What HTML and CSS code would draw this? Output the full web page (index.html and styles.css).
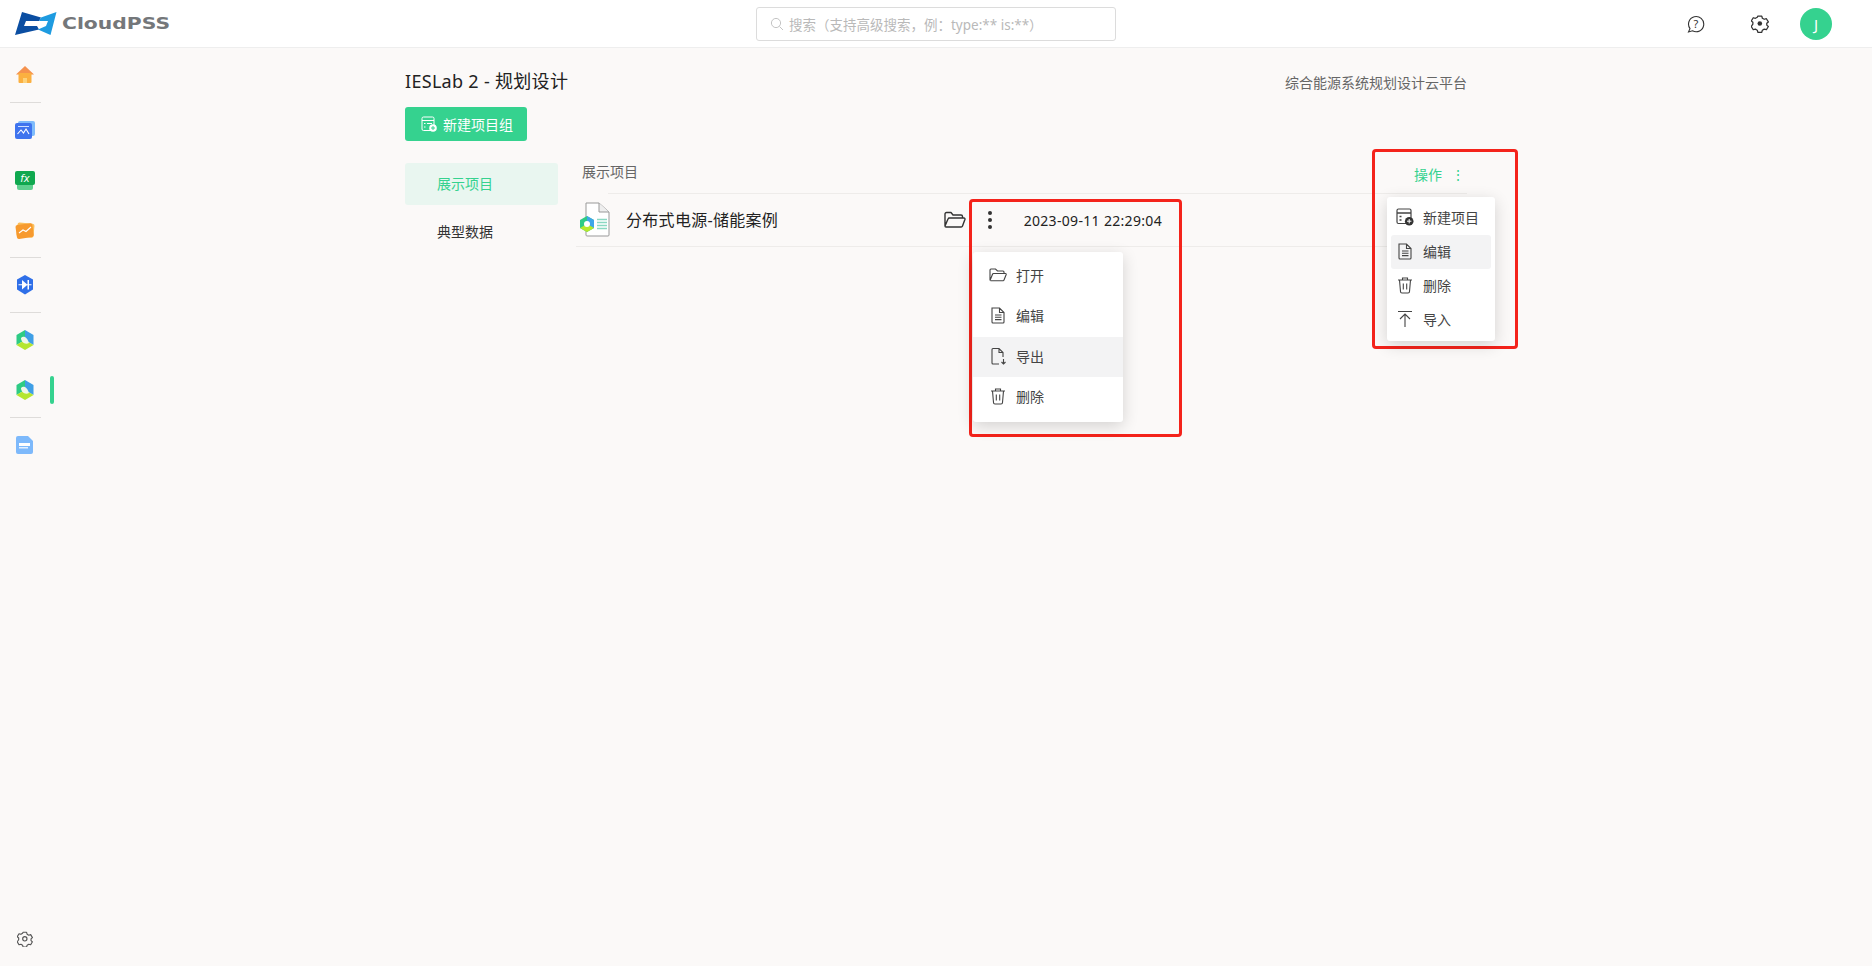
FILE: index.html
```html
<!DOCTYPE html>
<html lang="zh-CN">
<head>
<meta charset="utf-8">
<title>IESLab 2 - 规划设计</title>
<link rel="stylesheet" href="styles.css">
</head>
<body>
<header class="topbar">
  <div class="brand">
    <svg class="logo" viewBox="0 0 42 23" width="42" height="23">
      <path fill="#0b4ea2" d="M0 23 L7 0 L26 5.5 L24 9 L11 9 L9 14 L22 14 L24 17.5 Z"/>
      <path fill="#1e9be0" d="M41.5 0 L35.5 23 L23 17.5 L31 14 L33 9 L24 9 L26 5.5 Z"/>
    </svg>
    <span class="brand-name">CloudPSS</span>
  </div>
  <div class="search">
    <svg class="search-icon" viewBox="0 0 14 14" width="14" height="14"><circle cx="6" cy="6" r="4.6" fill="none" stroke="#c4c4c4"/><path d="M9.5 9.5 L13 13" stroke="#c4c4c4"/></svg>
    <span>搜索（支持高级搜索，例：type:** is:**）</span>
  </div>
  <div class="top-actions">
    <svg viewBox="0 0 18 18" width="18" height="18"><path fill="none" stroke="#333" stroke-width="1.1" d="M1.5 17 L3 13.6 A7.6 7.6 0 1 1 5.5 15.8 Z"/><text x="9" y="12.5" class="qmark">?</text></svg>
    <svg viewBox="0 0 18 18" width="18" height="18"><path fill="none" stroke="#333" stroke-width="1.3" stroke-linejoin="round" d="M7 1.5h4l.6 2.2 1.9 1.1 2.2-.6 2 3.4-1.6 1.4v2l1.6 1.4-2 3.4-2.2-.6-1.9 1.1-.6 2.2H7l-.6-2.2-1.9-1.1-2.2.6-2-3.4L1.9 10V8L.3 6.6l2-3.4 2.2.6 1.9-1.1z" transform="translate(0 -.3) scale(.98 .95)"/><circle cx="8.8" cy="8.5" r="2.3" fill="#333"/></svg>
    <span class="avatar">J</span>
  </div>
</header>

<div class="shell">
  <nav class="rail">
    <div class="rail-item">
      <svg viewBox="0 0 20 20" width="20" height="20"><path fill="#f5924e" d="M10 1 L19 9.5 H1 Z"/><rect x="3.5" y="8" width="13" height="10" rx="1" fill="#fbb040"/><rect x="8" y="13" width="4" height="5" fill="#fdd27a"/></svg>
    </div>
    <div class="rail-sep"></div>
    <div class="rail-item">
      <svg viewBox="0 0 20 20" width="20" height="20"><rect x="3" y="1" width="17" height="15" rx="2" fill="#7fbcfb"/><rect x="0" y="3" width="17" height="16" rx="2" fill="#3f74ee"/><path d="M3 6.5h11" stroke="#cfe0ff"/><path d="M2.5 14 L6 10 L8.5 13 L11 9 L14 14" fill="none" stroke="#fff" stroke-width="1.1"/></svg>
    </div>
    <div class="rail-item">
      <svg viewBox="0 0 20 20" width="20" height="20"><rect x="2" y="4" width="16" height="16" rx="2" fill="#5fd08f"/><rect x="0" y="1" width="20" height="14" rx="2" fill="#10a84f"/><text x="10" y="12" class="fx">fx</text></svg>
    </div>
    <div class="rail-item">
      <svg viewBox="0 0 20 20" width="20" height="20"><rect x="2" y="3" width="17" height="14" rx="2" fill="#fbbf5a" transform="rotate(6 10 10)"/><rect x="1" y="4" width="17" height="14" rx="2" fill="#f79a2e" transform="rotate(-8 10 10)"/><path d="M4 13 L8 10 L11 11.5 L16 7" fill="none" stroke="#fff" stroke-width="1.1"/></svg>
    </div>
    <div class="rail-sep"></div>
    <div class="rail-item">
      <svg viewBox="0 0 20 20" width="20" height="20"><path fill="#2f6fe8" d="M10 0 L18 4.5 V14.5 L10 19.5 L2 14.5 V4.5 Z"/><path fill="#fff" d="M7 5 L12.5 9.75 L7 14.5 Z M12.5 5 H14 V14.5 H12.5 Z M3.5 9.2 H16.5 V10.3 H3.5 Z"/></svg>
    </div>
    <div class="rail-sep"></div>
    <div class="rail-item">
      <svg viewBox="0 0 20 20" width="20" height="20"><path fill="#2ecb85" d="M10 10 L10 0 L1.5 5 V15 Z"/><path fill="#3f9fe6" d="M10 10 L10 0 L18.5 5 V15 Z"/><path fill="#b4e62f" d="M10 10 L18.5 15 L10 20 L1.5 15 Z"/><path fill="#eef6e8" d="M6 8 C8 5.5 12 6.5 14 13 C10 15 6 12 6 8Z"/></svg>
    </div>
    <div class="rail-item rail-active">
      <svg viewBox="0 0 20 20" width="20" height="20"><path fill="#2ecb85" d="M10 10 L10 0 L1.5 5 V15 Z"/><path fill="#3f9fe6" d="M10 10 L10 0 L18.5 5 V15 Z"/><path fill="#b4e62f" d="M10 10 L18.5 15 L10 20 L1.5 15 Z"/><path fill="#eef6e8" d="M6 8 C8 5.5 12 6.5 14 13 C10 15 6 12 6 8Z"/></svg>
    </div>
    <div class="rail-sep"></div>
    <div class="rail-item">
      <svg viewBox="0 0 20 20" width="20" height="20"><path fill="#7db9fb" d="M3 1 H13 L18 6 V17 A2 2 0 0 1 16 19 H3 A2 2 0 0 1 1 17 V3 A2 2 0 0 1 3 1Z"/><rect x="4" y="8" width="11" height="3" fill="#fff"/><rect x="4" y="12" width="9" height="1.5" fill="#e3f0ff"/></svg>
    </div>
    <div class="rail-foot">
      <svg viewBox="0 0 18 18" width="16" height="16"><path fill="none" stroke="#555" stroke-width="1.3" stroke-linejoin="round" d="M7 1.5h4l.6 2.2 1.9 1.1 2.2-.6 2 3.4-1.6 1.4v2l1.6 1.4-2 3.4-2.2-.6-1.9 1.1-.6 2.2H7l-.6-2.2-1.9-1.1-2.2.6-2-3.4L1.9 10V8L.3 6.6l2-3.4 2.2.6 1.9-1.1z" transform="scale(.98 .98)"/><circle cx="8.8" cy="8.8" r="2.4" fill="none" stroke="#555" stroke-width="1.3"/></svg>
    </div>
  </nav>

  <main class="content">
    <div class="title-row">
      <h1 class="title">IESLab 2 - 规划设计</h1>
      <span class="subtitle">综合能源系统规划设计云平台</span>
    </div>
    <button class="primary">
      <svg viewBox="0 0 16 16" width="16" height="16"><rect x="1" y="1" width="12" height="13.5" rx="1.5" fill="none" stroke="#fff"/><path d="M1 4.5h12M3 7.5h1.5M3 11h1.5M6 7.5h5" stroke="#fff"/><circle cx="12" cy="12" r="3.8" fill="#fff"/><path d="M10 12h4M12 10v4" stroke="#35d28f"/></svg>
      新建项目组
    </button>
    <div class="columns">
      <aside class="tabs">
        <div class="tab tab-on">展示项目</div>
        <div class="tab">典型数据</div>
      </aside>
      <section class="list">
        <div class="list-head">
          <span class="list-title">展示项目</span>
          <span class="ops">操作<i class="ops-dots">⋮</i></span>
        </div>
        <div class="rule"></div>
        <div class="row">
          <svg class="file-icon" viewBox="0 0 32 36" width="32" height="36">
            <path d="M7 1 H20 L30 10 V33 A1 1 0 0 1 29 34 H8 A1 1 0 0 1 7 33 Z" fill="#fff" stroke="#999"/>
            <path d="M20 1 V10 H30" fill="#eee" stroke="#999"/>
            <path d="M18 17.5h10M18 20.5h10M18 23.5h10M18 26.5h10" stroke="#8ad8c2" stroke-width="1.3"/>
            <path d="M8 14 L15 18 V26 L8 30 L1 26 V18 Z" fill="#2ecb85"/>
            <path d="M8 14 L15 18 V26 L8 22 Z" fill="#3fa6e8"/>
            <path d="M1 26 L8 30 L15 26 L8 22 Z" fill="#b6e82d"/>
            <circle cx="8" cy="22" r="3" fill="#fff"/>
          </svg>
          <span class="row-name">分布式电源-储能案例</span>
          <svg class="folder" viewBox="0 0 22 18" width="22" height="18"><path fill="none" stroke="#333" stroke-width="1.4" stroke-linejoin="round" d="M1 15 V3 A1.5 1.5 0 0 1 2.5 1.5 H7 L9 4 H17 A1.5 1.5 0 0 1 18.5 5.5 V7 M1 15 L4 8 A1.5 1.5 0 0 1 5.5 7 H20 A1 1 0 0 1 21 8.2 L18.5 15 A1.5 1.5 0 0 1 17 16 H2 A1 1 0 0 1 1 15Z"/></svg>
          <span class="kebab"><b></b><b></b><b></b></span>
          <span class="row-date">2023-09-11 22:29:04</span>
        </div>
      </section>
    </div>

    <div class="mark mark-row"></div>
    <div class="mark mark-ops"></div>

    <ul class="menu menu-row">
      <li><svg viewBox="0 0 18 18" width="18" height="18"><path fill="none" stroke="#444" stroke-width="1.1" d="M1 14.5 V4 A1 1 0 0 1 2 3 H6.5 L8.5 5 H14 A1 1 0 0 1 15 6 V7.5 M1 14.5 L3.5 8.3 A1 1 0 0 1 4.5 7.5 H16.5 A.8 .8 0 0 1 17.2 8.5 L15 14 A1 1 0 0 1 14 14.8 H1.5"/></svg>打开</li>
      <li><svg viewBox="0 0 18 18" width="18" height="18"><path fill="none" stroke="#444" stroke-width="1.1" d="M3 2 H10.5 L15 6.5 V16 A1 1 0 0 1 14 17 H4 A1 1 0 0 1 3 16 Z M10.5 2 V6.5 H15 M6 9h6.5M6 11.3h6.5M6 13.6h6.5"/></svg>编辑</li>
      <li class="hot"><svg viewBox="0 0 18 18" width="18" height="18"><path fill="none" stroke="#444" stroke-width="1.1" d="M10 17 H4 A1 1 0 0 1 3 16 V2.5 A1 1 0 0 1 4 1.5 H10 L14 5.5 V10 M10 1.5 V5.5 H14 M14.5 12 V17 M12.5 15 L14.5 17 L16.5 15"/></svg>导出</li>
      <li><svg viewBox="0 0 18 18" width="18" height="18"><path fill="none" stroke="#444" stroke-width="1.1" d="M2 4 H16 M6.5 4 V2 H11.5 V4 M3.5 4 L4.5 15.5 A1.5 1.5 0 0 0 6 17 H12 A1.5 1.5 0 0 0 13.5 15.5 L14.5 4 M7.3 7.5 V13.5 M10.7 7.5 V13.5"/></svg>删除</li>
    </ul>

    <ul class="menu menu-ops">
      <li><svg viewBox="0 0 18 18" width="18" height="18"><rect x="1" y="1" width="14" height="14.5" rx="1.5" fill="none" stroke="#444" stroke-width="1.2"/><path d="M1 5h14M3.5 8.5h2M3.5 12h2" stroke="#444" stroke-width="1.3"/><circle cx="13.2" cy="13.2" r="4.3" fill="#333"/><path d="M11 13.2h4.4M13.2 11v4.4" stroke="#fff"/></svg>新建项目</li>
      <li class="hot"><svg viewBox="0 0 18 18" width="18" height="18"><path fill="none" stroke="#444" stroke-width="1.1" d="M3 2 H10.5 L15 6.5 V16 A1 1 0 0 1 14 17 H4 A1 1 0 0 1 3 16 Z M10.5 2 V6.5 H15 M6 9h6.5M6 11.3h6.5M6 13.6h6.5"/></svg>编辑</li>
      <li><svg viewBox="0 0 18 18" width="18" height="18"><path fill="none" stroke="#444" stroke-width="1.1" d="M2 4 H16 M6.5 4 V2 H11.5 V4 M3.5 4 L4.5 15.5 A1.5 1.5 0 0 0 6 17 H12 A1.5 1.5 0 0 0 13.5 15.5 L14.5 4 M7.3 7.5 V13.5 M10.7 7.5 V13.5"/></svg>删除</li>
      <li><svg viewBox="0 0 18 18" width="18" height="18"><path fill="none" stroke="#444" stroke-width="1.1" d="M2 1.5 H16 M9 17 V4 M4 9 L9 4 L14 9"/></svg>导入</li>
    </ul>
  </main>
</div>
</body>
</html>
```

FILE: styles.css
```css
* { box-sizing: border-box; }
html, body { height: 100%; }
body {
  margin: 0;
  height: 966px;
  overflow: hidden;
  display: flex;
  flex-direction: column;
  background: #fbf9f8;
  color: #2b2b2b;
  font-family: "Noto Sans", "Noto Sans CJK SC", sans-serif;
  font-size: 14px;
}
.topbar {
  flex: none;
  height: 48px;
  display: flex;
  align-items: center;
  background: #fff;
  border-bottom: 1px solid #eeeeee;
  padding: 0 40px 0 15px;
}
.brand { flex: none; display: flex; align-items: center; gap: 5px; width: 160px; }
.brand-name {
  font-family: "DejaVu Sans", sans-serif;
  font-weight: 700;
  font-size: 15.5px;
  color: #74777a;
  transform: scaleX(1.31);
  transform-origin: left center;
}
.search {
  flex: none;
  width: 360px;
  height: 34px;
  margin-left: 581px;
  border: 1px solid #dcdcdc;
  border-radius: 3px;
  display: flex;
  align-items: center;
  gap: 5px;
  padding-left: 13px;
  color: #b9b9b9;
  font-size: 13.5px;
}
.top-actions { margin-left: auto; display: flex; align-items: center; gap: 46px; }
.qmark { font: 11px "Noto Sans", sans-serif; fill: #333; text-anchor: middle; }
.fx { font: italic 400 10px "DejaVu Sans", sans-serif; fill: #fff; text-anchor: middle; }
.avatar {
  width: 32px;
  height: 32px;
  margin-left: -15px;
  border-radius: 50%;
  background: #35d28f;
  color: #fff;
  font-size: 15px;
  display: flex;
  align-items: center;
  justify-content: center;
}
.shell { flex: 1; display: flex; min-height: 0; }
.rail {
  flex: none;
  width: 54px;
  display: flex;
  flex-direction: column;
  padding-top: 2px;
}
.rail-item {
  flex: none;
  height: 50px;
  display: flex;
  align-items: center;
  padding-left: 15px;
  position: relative;
}
.rail-active::after {
  content: "";
  position: absolute;
  right: 0;
  top: 11px;
  width: 4px;
  height: 28px;
  border-radius: 2px;
  background: #35d28f;
}
.rail-sep {
  flex: none;
  height: 5px;
  margin: 0 13px 0 10px;
  position: relative;
}
.rail-sep::before {
  content: "";
  position: absolute;
  left: 0;
  right: 0;
  top: 2px;
  height: 1px;
  background: #dedcda;
}
.rail-foot { margin-top: auto; padding: 0 0 19px 17px; line-height: 0; }
.content {
  flex: none;
  width: 1062px;
  margin-left: 351px;
  padding-top: 17px;
  position: relative;
}
.title-row { display: flex; align-items: center; justify-content: space-between; height: 30px; }
.title { margin: 0; font-size: 18px; font-weight: 400; color: #222; letter-spacing: .3px; }
.subtitle { color: #666; font-size: 14px; margin-top: 3px; }
.primary {
  display: flex;
  align-items: center;
  gap: 6px;
  margin-top: 12px;
  width: 122px;
  height: 34px;
  padding: 0 0 0 16px;
  border: 0;
  border-radius: 3px;
  background: #35d28f;
  color: #fff;
  font: inherit;
}
.columns { display: flex; margin-top: 22px; }
.tabs { flex: none; width: 153px; display: flex; flex-direction: column; gap: 6px; }
.tab {
  height: 42px;
  line-height: 42px;
  padding-left: 32px;
  border-radius: 3px;
  color: #333;
}
.tab-on { background: #e9f6f0; color: #35d28f; }
.list { flex: 1; margin-left: 18px; }
.list-head { height: 30px; display: flex; align-items: flex-start; justify-content: space-between; padding: 0 2px 0 6px; line-height: 18px; }
.list-title { color: #666; }
.ops { color: #35d28f; margin-top: 3px; display: flex; align-items: center; }
.ops-dots { font-style: normal; margin-left: 9px; font-size: 14px; }
.rule { height: 1px; margin-left: 32px; background: #eeecea; }
.row {
  height: 53px;
  display: flex;
  align-items: center;
  padding: 0 305px 0 3px;
  border-bottom: 1px solid #eeecea;
}
.file-icon { flex: none; }
.row-name { flex: 1; margin: -2px 0 0 15px; font-size: 16px; color: #222; letter-spacing: .3px; }
.folder { flex: none; margin-right: 17px; }
.kebab { flex: none; width: 14px; display: flex; flex-direction: column; align-items: center; gap: 3px; margin-right: 27px; }
.kebab b { width: 4px; height: 4px; border-radius: 50%; background: #333; }
.row-date { flex: none; color: #222; letter-spacing: .32px; }
.mark { position: absolute; border: 3px solid #f4231b; border-radius: 4px; }
.mark-row { left: 564px; top: 151px; width: 213px; height: 238px; }
.mark-ops { left: 967px; top: 101px; width: 146px; height: 200px; }
.menu {
  position: absolute;
  margin: 0;
  list-style: none;
  background: #fff;
  border-radius: 3px;
  box-shadow: 0 4px 16px rgba(0, 0, 0, .16);
  color: #444;
}
.menu li { display: flex; align-items: center; padding-bottom: 2px; }
.menu-row { left: 568px; top: 204px; width: 150px; height: 170px; padding: 4px 0; }
.menu-row li { height: 40.33px; padding-left: 16px; gap: 9px; }
.menu-ops { left: 982px; top: 149px; width: 108px; height: 144px; padding: 4px; }
.menu-ops li { height: 34px; padding-left: 5px; gap: 9px; border-radius: 3px; white-space: nowrap; }
.menu .hot { background: #f3f3f4; }
```
